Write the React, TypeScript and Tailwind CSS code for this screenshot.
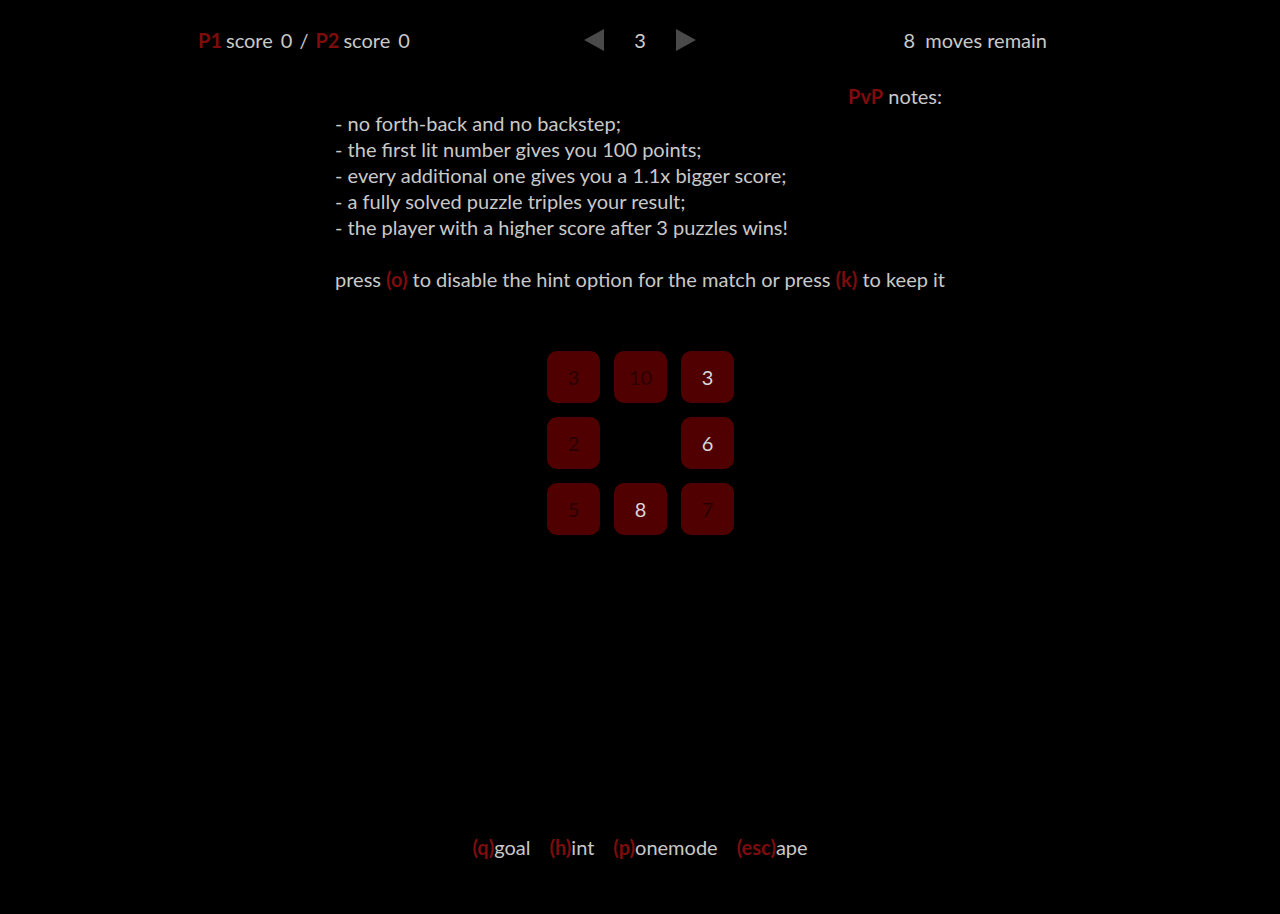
// App.tsx — PvP puzzle screen: scores, round selector, notes, 3x3 number grid, key hints.

const RED = "text-[#7d0c0c]";

const NOTES = [
  "- no forth-back and no backstep;",
  "- the first lit number gives you 100 points;",
  "- every additional one gives you a 1.1x bigger score;",
  "- a fully solved puzzle triples your result;",
  "- the player with a higher score after 3 puzzles wins!",
];

type Cell = { n: number; lit: boolean } | null;

const GRID: Cell[] = [
  { n: 3, lit: false },
  { n: 10, lit: false },
  { n: 3, lit: true },
  { n: 2, lit: false },
  null,
  { n: 6, lit: true },
  { n: 5, lit: false },
  { n: 8, lit: true },
  { n: 7, lit: false },
];

function Key({ k }: { k: string }) {
  return <span className={`${RED} font-bold`}>({k})</span>;
}

export default function App() {
  return (
    <div
      className="min-h-[914px] w-full bg-black text-[#c9c9c9] text-[20px] leading-[26px] flex flex-col"
      style={{ fontFamily: "Lato, 'Open Sans', sans-serif" }}
    >
      {/* top bar */}
      <div className="grid grid-cols-3 items-center h-[26px] mt-[27px] px-[198px]">
        <div className="flex items-center">
          <span className={`${RED} font-bold`}>P1</span>
          <span className="ml-[4px]">score</span>
          <span className="ml-[8px]">0</span>
          <span className="ml-[7px]">/</span>
          <span className={`${RED} font-bold ml-[7px]`}>P2</span>
          <span className="ml-[4px]">score</span>
          <span className="ml-[8px]">0</span>
        </div>
        <div className="flex items-center justify-center gap-[30px]">
          <svg width="20" height="22" viewBox="0 0 20 22">
            <polygon points="20,0 20,22 0,11" fill="#4a4a4a" />
          </svg>
          <span className="text-[#d0d0d0]">3</span>
          <svg width="20" height="22" viewBox="0 0 20 22">
            <polygon points="0,0 0,22 20,11" fill="#4a4a4a" />
          </svg>
        </div>
        <div className="text-right pr-[35px] whitespace-pre">8  moves remain</div>
      </div>

      {/* notes */}
      <div className="w-[610px] mt-[31px] ml-[335px]">
        <div className="text-right pr-[3px] -mt-[1px] mb-[1px]">
          <span className={`${RED} font-bold`}>PvP</span> notes:
        </div>
        {NOTES.map((l) => (
          <div key={l}>{l}</div>
        ))}
        <div className="h-[26px]" />
        <div className="whitespace-nowrap">
          press <Key k="o" /> to disable the hint option for the match or press <Key k="k" /> to keep it
        </div>
      </div>

      {/* grid */}
      <div className="ml-[547px] mt-[59px] grid grid-cols-[53px_53px_53px] gap-x-[14px] gap-y-[14px]">
        {GRID.map((c, i) =>
          c ? (
            <div
              key={i}
              className={`h-[52px] w-[53px] rounded-[10px] bg-[#500000] flex items-center justify-center ${
                c.lit ? "text-[#d8d8d8]" : "text-[#2a0000]"
              }`}
            >
              {c.n}
            </div>
          ) : (
            <div key={i} className="h-[52px] w-[53px]" />
          ),
        )}
      </div>

      {/* key hints */}
      <div className="mt-auto mb-[54px] flex justify-center gap-[19px]">
        <span><Key k="q" />goal</span>
        <span><Key k="h" />int</span>
        <span><Key k="p" />onemode</span>
        <span><Key k="esc" />ape</span>
      </div>
    </div>
  );
}
